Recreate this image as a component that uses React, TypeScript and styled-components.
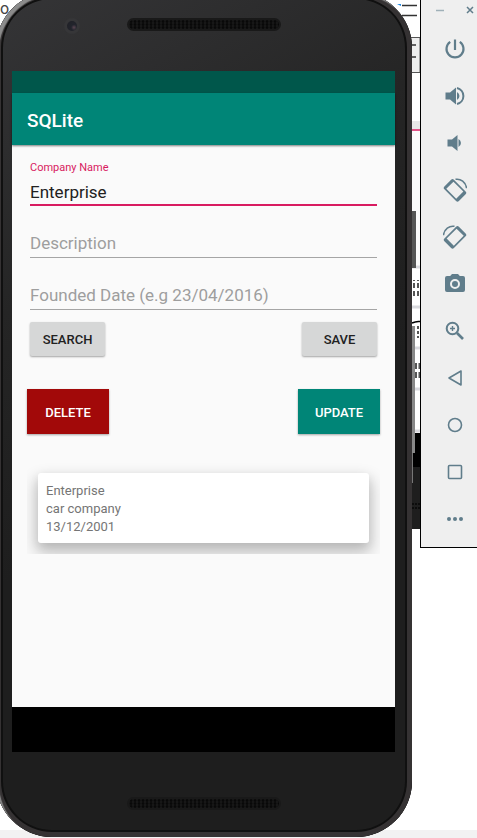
import React, { useState } from "react";
import styled, { createGlobalStyle } from "styled-components";

const GlobalStyle = createGlobalStyle`
  *, *::before, *::after { box-sizing: border-box; }
  body {
    margin: 0;
    background: #fff;
    font-family: Roboto, "Liberation Sans", sans-serif;
  }
  button, input { font-family: inherit; }
`;

const slate = "#607d8b";
const teal = "#008577";
const accent = "#d81b60";

const Desktop = styled.div`
  display: grid;
  grid-template-columns: minmax(0, 1fr) 8px 57px;
  align-items: start;
  min-height: 100vh;
  overflow: hidden;
  background: linear-gradient(to top, #f2f2f2 8px, #fff 8px);
`;

const BehindLeft = styled.div`
  grid-area: 1 / 1;
  font-size: 16px;
  line-height: 17px;
  color: #444;
`;

const BehindRight = styled.svg`
  grid-area: 1 / 1 / 2 / 3;
  justify-self: end;
  display: block;
`;

const Phone = styled.main`
  grid-area: 1 / 1;
  z-index: 1;
  display: flex;
  flex-direction: column;
  min-height: calc(100vh + 7px);
  margin: -8px 0 0 -4px;
  padding: 0 17px 0 16px;
  border-radius: 56px;
  background: linear-gradient(150deg, #353537 0, #252525 30%, #1e1e1e 55%);
  box-shadow: inset 3px 3px 1px #8c8c8c, inset 0 0 0 5px #353233, inset 0 0 0 7px #101010;
`;

const Bezel = styled.div<{ $height: number; $drop: number }>`
  display: grid;
  grid-template-columns: 1fr 154px 1fr;
  align-items: start;
  height: ${(p) => p.$height}px;
  padding-top: ${(p) => p.$drop}px;
`;

const Camera = styled.span`
  justify-self: center;
  width: 16px;
  height: 16px;
  margin-left: 6px;
  border: 3px solid #363638;
  border-radius: 50%;
  background: radial-gradient(circle at 70% 65%, #5a4652 0, #22242c 30%, #202126 100%);
`;

const Grille = styled.span`
  grid-column: 2;
  height: 13px;
  border-radius: 7px;
  border: 2px solid #191919;
  background: radial-gradient(circle, #060606 0, #0b0b0b 1px, #1a1a1a 2px) 0 0 / 4px 3px;
`;

const Screen = styled.section`
  flex: 1;
  display: flex;
  flex-direction: column;
  background: #fafafa;
`;

const StatusBar = styled.div`
  height: 22px;
  background: #00574b;
`;

const AppBar = styled.header`
  display: flex;
  align-items: center;
  height: 52px;
  padding: 4px 15px 0;
  background: ${teal};
  box-shadow: 0 1px 2px rgba(0, 0, 0, 0.5);
`;

const Title = styled.h1`
  margin: 0;
  font-size: 19px;
  font-weight: 500;
  line-height: 24px;
  color: #fff;
`;

const Content = styled.div`
  flex: 1;
  padding: 15px;
`;

const Form = styled.form`
  display: block;
`;

const Field = styled.div`
  display: flex;
  flex-direction: column;
  justify-content: flex-end;
  height: 52px;
  padding: 0 3px;
  &:first-child { height: 46px; }
`;

const FloatingLabel = styled.label`
  font-size: 11px;
  line-height: 14px;
  color: ${accent};
`;

const TextBox = styled.input<{ $active?: boolean }>`
  width: 100%;
  height: 31px;
  padding: ${(p) => (p.$active ? "6px 0 2px" : "5px 0 3px")};
  border: 0;
  border-bottom: ${(p) => (p.$active ? `2px solid ${accent}` : "1px solid #a5a5a5")};
  outline: 0;
  background: transparent;
  font-size: 17px;
  line-height: 22px;
  color: #212121;
  &::placeholder { color: #9e9e9e; opacity: 1; }
`;

const ButtonRow = styled.div<{ $inset: number; $top: number }>`
  display: flex;
  justify-content: space-between;
  padding: 0 ${(p) => p.$inset}px;
  margin-top: ${(p) => p.$top}px;
`;

const GreyButton = styled.button`
  width: 75px;
  height: 34px;
  padding: 0;
  border: 0;
  border-radius: 2px;
  background: #d6d7d7;
  color: #212121;
  font-size: 13px;
  font-weight: 500;
  box-shadow: 0 1px 2px rgba(0, 0, 0, 0.35);
`;

const SolidButton = styled.button<{ $color: string }>`
  width: 82px;
  height: 45px;
  padding: 1px 0 0;
  border: 0;
  background: ${(p) => p.$color};
  color: #fff;
  font-size: 13px;
  font-weight: 500;
  box-shadow: 0 1px 2px rgba(0, 0, 0, 0.35);
`;

const Results = styled.div`
  margin-top: 29px;
  padding: 10px 11px 11px;
  overflow: hidden;
`;

const Card = styled.article`
  padding: 9px 8px 7px;
  border-radius: 3px;
  background: #fff;
  box-shadow: 0 8px 16px 2px rgba(0, 0, 0, 0.24), 0 3px 10px rgba(0, 0, 0, 0.06);
`;

const CardLine = styled.p`
  margin: 0;
  font-size: 13px;
  line-height: 18px;
  color: #757575;
`;

const NavBar = styled.div`
  height: 45px;
  background: #000;
`;

const Toolbar = styled.aside`
  grid-area: 1 / 3;
  display: flex;
  flex-direction: column;
  padding-bottom: 5px;
  border: solid #000;
  border-width: 0 0 1px 1px;
  background: #efefef;
`;

const WindowControls = styled.div`
  display: flex;
  justify-content: space-between;
  height: 25px;
  padding: 3px 0 0 12px;
`;

const IconButton = styled.button`
  display: flex;
  align-items: center;
  justify-content: center;
  height: 47px;
  padding: 0 0 0 12px;
  border: 0;
  background: none;
`;

const WindowButton = styled.button`
  width: 14px;
  height: 14px;
  padding: 0;
  border: 0;
  background: none;
`;

const Glyph = styled.svg`
  display: block;
`;

const Icon = ({ children }: { children: React.ReactNode }) => (
  <Glyph width="24" height="24" viewBox="0 0 24 24" fill={slate} aria-hidden="true">
    {children}
  </Glyph>
);

const rotatePhone = (
  <>
    <path
      transform="rotate(45 12 12)"
      fillRule="evenodd"
      d="M4 5.500h16.500a2 2 0 0 1 2 2v9.500a2 2 0 0 1-2 2H4a2 2 0 0 1-2-2v-9.500a2 2 0 0 1 2-2zM5 7.200v10.100h14V7.200z"
    />
    <path d="M12.500 1.300c5-1 10.500 3 11 9" fill="none" stroke={slate} strokeWidth="1.500" />
  </>
);

const tools: { name: string; art: React.ReactNode }[] = [
  {
    name: "Power",
    art: (
      <g fill="none" stroke={slate} strokeWidth="2.2">
        <path d="M12 2.500v10.500" />
        <path d="M7.200 4.800a8.500 8.500 0 1 0 9.600 0" />
      </g>
    ),
  },
  {
    name: "Volume up",
    art: (
      <>
        <path d="M2.500 8.500h4.500L13 3.500v17L7 15.500H2.500z" />
        <path d="M14 8a4.500 4.500 0 0 1 0 8z" />
        <path d="M14 4a8.200 8.200 0 0 1 0 16" fill="none" stroke={slate} strokeWidth="2" />
      </>
    ),
  },
  {
    name: "Volume down",
    art: (
      <>
        <path d="M4.500 8.500H9L14.500 4v16L9 15.500H4.500z" />
        <path d="M15.500 8a4.500 4.500 0 0 1 0 8z" />
      </>
    ),
  },
  { name: "Rotate left", art: rotatePhone },
  { name: "Rotate right", art: <g transform="matrix(-1 0 0 1 24 0)">{rotatePhone}</g> },
  {
    name: "Take screenshot",
    art: (
      <path
        fillRule="evenodd"
        d="M9 2 7.200 4H4a2 2 0 0 0-2 2v12a2 2 0 0 0 2 2h16a2 2 0 0 0 2-2V6a2 2 0 0 0-2-2h-3.200L15 2zm3 5a5 5 0 1 1 0 10 5 5 0 0 1 0-10zm0 2a3 3 0 1 0 0 6 3 3 0 0 0 0-6z"
      />
    ),
  },
  {
    name: "Zoom",
    art: (
      <g fill="none" stroke={slate}>
        <circle cx="9.500" cy="9.500" r="5.800" strokeWidth="2" />
        <path d="m14 14 6 6" strokeWidth="2.600" />
        <path d="M9.500 7v5M7 9.500h5" strokeWidth="1.400" />
      </g>
    ),
  },
  { name: "Back", art: <path d="M18 5v14L6 12z" fill="none" stroke={slate} strokeWidth="1.600" strokeLinejoin="round" /> },
  { name: "Home", art: <circle cx="12" cy="12" r="6.500" fill="none" stroke={slate} strokeWidth="1.600" /> },
  { name: "Overview", art: <rect x="5.500" y="5.500" width="13" height="13" rx="1" fill="none" stroke={slate} strokeWidth="1.600" /> },
  {
    name: "More",
    art: (
      <>
        <circle cx="6" cy="12" r="2" />
        <circle cx="12" cy="12" r="2" />
        <circle cx="18" cy="12" r="2" />
      </>
    ),
  },
];

const WindowBehind = () => (
  <BehindRight width="40" height="529" viewBox="0 0 40 529" aria-hidden="true">
    <path d="M22 5.500h15M22 15.500h15" stroke="#333" strokeWidth="1.500" />
    <path d="M17 4h4v2z" fill="#1e88e5" />
    <rect x="20" y="37.500" width="20" height="35" fill="#eee" stroke="#555" />
    <path d="M24 45h12M24 57h12" stroke="#333" strokeWidth="1.500" />
    <rect x="20" y="121" width="20" height="8" fill="#e8e8e8" />
    <rect x="20" y="129" width="20" height="136" fill="#fafafa" />
    <path d="M20 130h20" stroke={accent} strokeWidth="1.500" />
    <path d="M20 267h20M20 307h20M20 348h20M20 389h20M20 431h20" stroke="#d9d9de" strokeWidth="3" />
    <path d="M34 280v16M38 280v16" stroke="#555" strokeWidth="2" strokeDasharray="1 2 5 3 5" />
    <path d="M32 323q4-2 8-1.500" stroke="#000" strokeWidth="1.500" fill="none" />
    <path d="M38 326v12" stroke="#555" strokeWidth="2" strokeDasharray="3 2" />
    <path d="M36 363v16M39.500 363v16" stroke="#555" strokeWidth="2" strokeDasharray="6 3" />
    <rect x="20" y="433" width="20" height="34" fill="#000" />
    <rect x="20" y="467" width="20" height="62" fill="#1e1e1e" />
    <path d="M32 504h8M32 508h8" stroke="#0c0c0c" strokeWidth="2" strokeDasharray="2 1" />
    <rect x="32" y="211" width="4" height="57" fill="#555" />
    <rect x="32" y="326" width="3" height="127" fill="#888" />
    <rect x="32" y="453" width="1" height="30" fill="#777" />
  </BehindRight>
);

export default function App() {
  const [company, setCompany] = useState("Enterprise");
  const [description, setDescription] = useState("");
  const [founded, setFounded] = useState("");

  return (
    <>
      <GlobalStyle />
      <Desktop>
        <BehindLeft aria-hidden="true">o</BehindLeft>
        <WindowBehind />
        <Phone>
          <Bezel $height={79} $drop={26}>
            <Camera />
            <Grille />
          </Bezel>
          <Screen>
            <StatusBar />
            <AppBar>
              <Title>SQLite</Title>
            </AppBar>
            <Content>
              <Form onSubmit={(e) => e.preventDefault()}>
                <Field>
                  <FloatingLabel htmlFor="company">Company Name</FloatingLabel>
                  <TextBox id="company" $active value={company} onChange={(e) => setCompany(e.target.value)} />
                </Field>
                <Field>
                  <TextBox
                    aria-label="Description"
                    placeholder="Description"
                    value={description}
                    onChange={(e) => setDescription(e.target.value)}
                  />
                </Field>
                <Field>
                  <TextBox
                    aria-label="Founded Date"
                    placeholder="Founded Date (e.g 23/04/2016)"
                    value={founded}
                    onChange={(e) => setFounded(e.target.value)}
                  />
                </Field>
                <ButtonRow $inset={3} $top={12}>
                  <GreyButton type="button">SEARCH</GreyButton>
                  <GreyButton type="submit">SAVE</GreyButton>
                </ButtonRow>
                <ButtonRow $inset={0} $top={33}>
                  <SolidButton type="button" $color="#a20909">DELETE</SolidButton>
                  <SolidButton type="button" $color={teal}>UPDATE</SolidButton>
                </ButtonRow>
              </Form>
              <Results>
                <Card>
                  <CardLine>Enterprise</CardLine>
                  <CardLine>car company</CardLine>
                  <CardLine>13/12/2001</CardLine>
                </Card>
              </Results>
            </Content>
            <NavBar />
          </Screen>
          <Bezel $height={85} $drop={45}>
            <Grille />
          </Bezel>
        </Phone>
        <Toolbar>
          <WindowControls>
            <WindowButton aria-label="Minimize">
              <Glyph width="14" height="14" viewBox="0 0 14 14">
                <path d="M3 7.500h8" stroke="#9fb0b8" strokeWidth="1.500" />
              </Glyph>
            </WindowButton>
            <WindowButton aria-label="Close">
              <Glyph width="14" height="14" viewBox="0 0 14 14">
                <path d="m4 4 6 6M10 4l-6 6" stroke={slate} strokeWidth="1.500" />
              </Glyph>
            </WindowButton>
          </WindowControls>
          {tools.map((t) => (
            <IconButton key={t.name} aria-label={t.name}>
              <Icon>{t.art}</Icon>
            </IconButton>
          ))}
        </Toolbar>
      </Desktop>
    </>
  );
}
